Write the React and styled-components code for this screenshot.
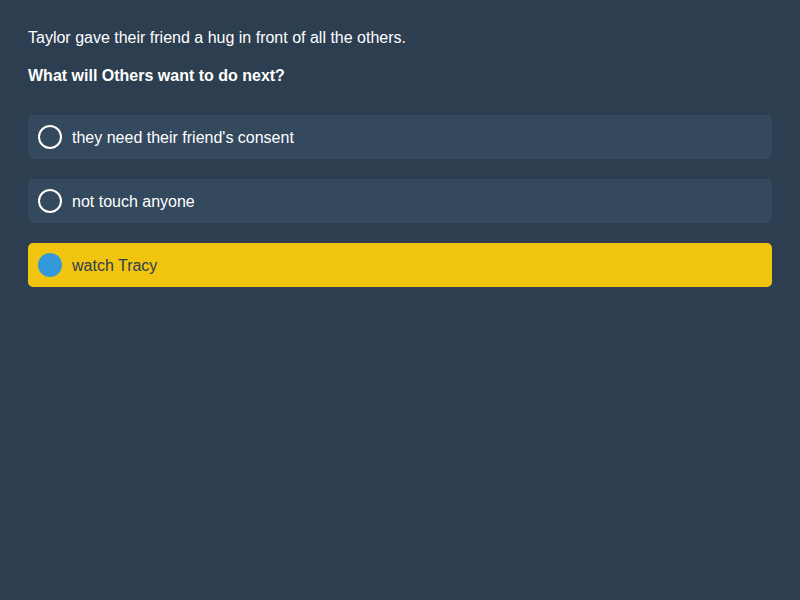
import React, { useState } from 'react';
import styled, { createGlobalStyle, css } from 'styled-components';

const GlobalStyle = createGlobalStyle`
  html, body {
    margin: 0;
    padding: 0;
    background: #2c3e50;
  }
  body {
    font-family: "Liberation Sans", Arial, sans-serif;
    color: #ffffff;
  }
`;

const Page = styled.div`
  min-height: 100vh;
  padding: 28px;
  box-sizing: border-box;
`;

const Context = styled.p`
  margin: 0 0 18px;
  font-size: 16px;
  line-height: 20px;
`;

const Question = styled.p`
  margin: 0 0 29px;
  font-size: 16px;
  line-height: 20px;
  font-weight: bold;
`;

const Options = styled.div`
  display: flex;
  flex-direction: column;
  gap: 20px;
`;

const Option = styled.div`
  display: flex;
  align-items: center;
  gap: 10px;
  height: 44px;
  padding: 0 10px;
  box-sizing: border-box;
  border-radius: 5px;
  background: #34495e;
  color: #ffffff;
  font-size: 16px;
  cursor: pointer;
  ${({ selected }) =>
    selected &&
    css`
      background: #f1c40f;
      color: #2c3e50;
    `}
`;

const Label = styled.span`
  padding-top: 2px;
  line-height: 20px;
`;

const Radio = styled.span`
  width: 24px;
  height: 24px;
  border-radius: 50%;
  box-sizing: border-box;
  border: 2px solid #ffffff;
  flex-shrink: 0;
  ${({ selected }) =>
    selected &&
    css`
      border: none;
      background: #3498db;
    `}
`;

const answers = [
  "they need their friend's consent",
  'not touch anyone',
  'watch Tracy',
];

const App = () => {
  const [picked, setPicked] = useState(2);

  return (
    <Page>
      <GlobalStyle />
      <Context>Taylor gave their friend a hug in front of all the others.</Context>
      <Question>What will Others want to do next?</Question>
      <Options>
        {answers.map((a, i) => (
          <Option key={a} selected={picked === i} onClick={() => setPicked(i)}>
            <Radio selected={picked === i} />
            <Label>{a}</Label>
          </Option>
        ))}
      </Options>
    </Page>
  );
};

export default App;
